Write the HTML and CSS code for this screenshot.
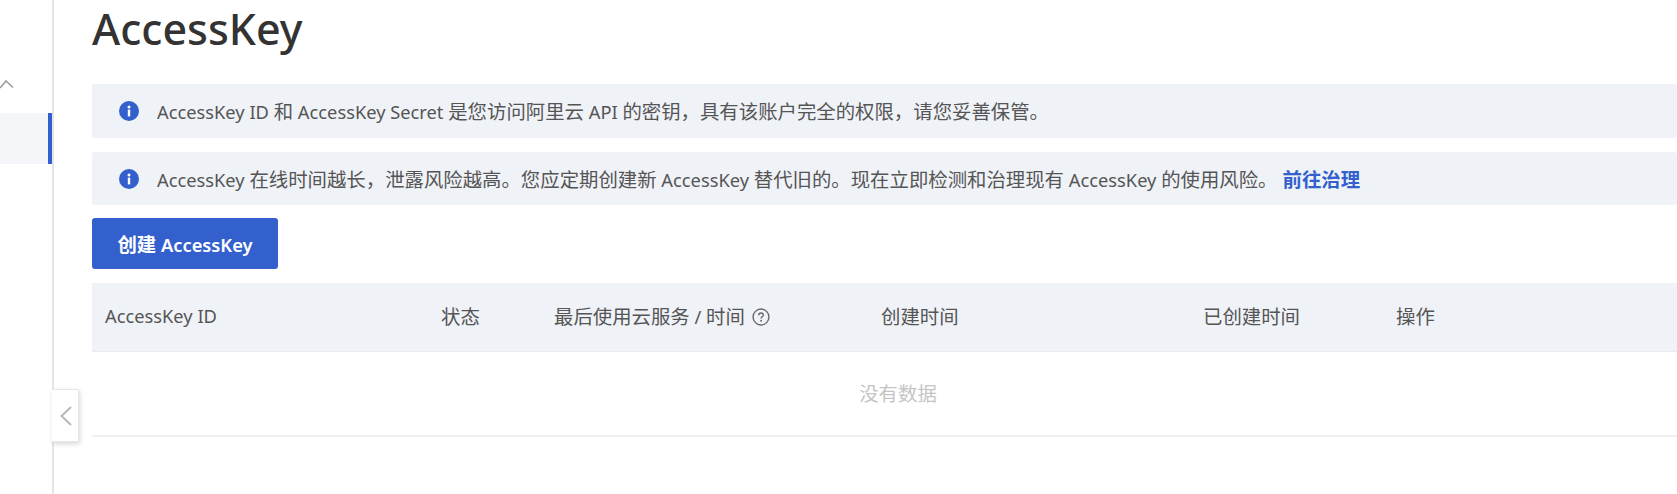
FILE: index.html
```html
<!DOCTYPE html>
<html lang="zh-CN">
<head>
<meta charset="utf-8">
<title>AccessKey</title>
<link rel="stylesheet" href="styles.css">
</head>
<body>
<div class="page">
  <aside class="sidebar">
    <div class="group-head">
      <svg class="chev-up" width="16" height="10" viewBox="0 0 16 10"><path d="M1 9 L7 2 L14 8.5" fill="none" stroke="#a0a0a0" stroke-width="1.7"/></svg>
    </div>
    <div class="nav-active"></div>
    <button class="collapse" aria-label="收起">
      <svg width="14" height="22" viewBox="0 0 14 22"><path d="M12 2 L2.5 11 L12 20" fill="none" stroke="#b5b5b5" stroke-width="1.8"/></svg>
    </button>
  </aside>
  <main class="main">
    <h1 class="title">AccessKey</h1>
    <div class="alert alert-first">
      <svg class="info" width="20" height="20" viewBox="0 0 20 20"><circle cx="10" cy="10" r="10" fill="#3360cc"/><rect x="8.8" y="8.6" width="2.4" height="6.8" fill="#fff"/><circle cx="10" cy="5.9" r="1.5" fill="#fff"/></svg>
      <span><span class="lat">AccessKey ID </span>和<span class="lat"> AccessKey Secret </span>是您访问阿里云<span class="lat"> API </span>的密钥，具有该账户完全的权限，请您妥善保管。</span>
    </div>
    <div class="alert alert-second">
      <svg class="info" width="20" height="20" viewBox="0 0 20 20"><circle cx="10" cy="10" r="10" fill="#3360cc"/><rect x="8.8" y="8.6" width="2.4" height="6.8" fill="#fff"/><circle cx="10" cy="5.9" r="1.5" fill="#fff"/></svg>
      <span><span class="lat">AccessKey </span>在线时间越长，泄露风险越高。您应定期创建新<span class="lat"> AccessKey </span>替代旧的。现在立即检测和治理现有<span class="lat"> AccessKey </span>的使用风险。</span>
      <a class="alert-link" href="#">前往治理</a>
    </div>
    <button class="primary">创建<span class="lat"> AccessKey</span></button>
    <div class="table">
      <div class="thead">
        <div class="th"><span class="lat">AccessKey ID</span></div>
        <div class="th">状态</div>
        <div class="th"><span>最后使用云服务<span class="lat"> / </span>时间</span>
          <svg class="help" width="18" height="18" viewBox="0 0 17 17"><circle cx="8.5" cy="8.5" r="7.5" fill="none" stroke="#666" stroke-width="1.3"/><path d="M6.3 6.8 C6.3 5.4 7.3 4.7 8.5 4.7 C9.8 4.7 10.7 5.5 10.7 6.6 C10.7 8 8.6 8.2 8.6 10" fill="none" stroke="#666" stroke-width="1.3"/><circle cx="8.6" cy="12.1" r=".9" fill="#666"/></svg>
        </div>
        <div class="th">创建时间</div>
        <div class="th">已创建时间</div>
        <div class="th">操作</div>
      </div>
      <div class="empty">没有数据</div>
    </div>
  </main>
</div>
</body>
</html>
```

FILE: styles.css
```css
* { box-sizing: border-box; }
html, body { margin: 0; padding: 0; height: 100%; background: #fff; overflow: hidden; }
body { font-family: "Noto Sans", "Noto Sans CJK SC", sans-serif; font-size: 19.4px; color: #555; }
.lat { font-size: 18.3px; }
.page { display: flex; height: 494px; }

.sidebar { position: relative; flex: 0 0 54px; border-right: 2px solid #e3e5ea; padding-top: 79px; }
.group-head { height: 34px; }
.chev-up { display: block; margin-left: -1px; }
.nav-active { height: 51px; background: #f5f6f9; border-right: 4px solid #3360cc; }
.collapse { position: absolute; left: 52px; top: 389px; width: 27px; height: 53px; padding: 0 0 0 2px; background: #fff; border: 1px solid #e6e6e6; border-left: 0; border-radius: 0 2px 2px 0; box-shadow: 1px 2px 5px rgba(0,0,0,.16); display: flex; align-items: center; justify-content: center; }

.main { flex: 1; min-width: 0; padding-left: 38px; }
.title { margin: 0; height: 84px; font-size: 43px; font-weight: 500; line-height: 58px; color: #333; }

.alert { display: flex; align-items: center; background: #eff2f7; border-radius: 3px; padding-left: 27px; white-space: nowrap; }
.alert-first { height: 54px; margin-bottom: 14px; padding-bottom: 1px; }
.alert-second { height: 53px; margin-bottom: 13px; }
.info { flex: none; margin-right: 18px; }
.alert-link { margin-left: 5px; color: #3360cc; font-weight: 600; text-decoration: none; }

.primary { display: block; width: 186px; height: 51px; border: 0; border-radius: 3px; background: #3360cc; color: #fff; font: 600 19.4px "Noto Sans", "Noto Sans CJK SC", sans-serif; padding: 0; margin-bottom: 14px; }

.thead { display: grid; grid-template-columns: 336px 113px 327px 322px 193px 1fr; align-items: center; height: 69px; background: #eff2f7; border-bottom: 1px solid #e9ebef; }
.th { padding-left: 13px; padding-bottom: 4px; white-space: nowrap; display: flex; align-items: center; gap: 7px; }
.help { margin-top: 3px; }
.empty { height: 85px; padding-bottom: 2px; padding-left: 27px; display: flex; align-items: center; justify-content: center; border-bottom: 2px solid #f0f0f2; color: #c4c4c4; }
```
